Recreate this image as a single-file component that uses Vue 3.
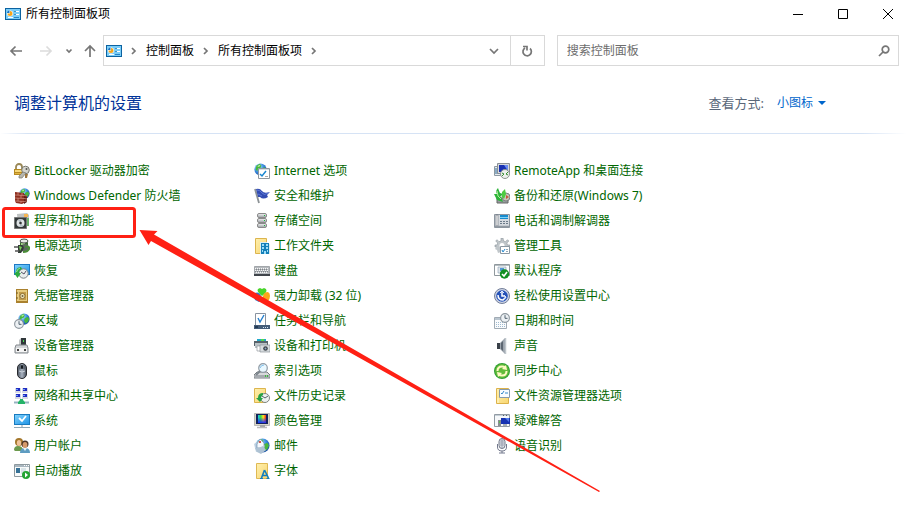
<script setup>
import { ref } from 'vue'

const search = ref('')
const viewMode = ref('small')

const columns = [
  [
    ['bitlocker', 'BitLocker 驱动器加密'],
    ['firewall', 'Windows Defender 防火墙'],
    ['programs', '程序和功能'],
    ['power', '电源选项'],
    ['recovery', '恢复'],
    ['credential', '凭据管理器'],
    ['region', '区域'],
    ['device', '设备管理器'],
    ['mouse', '鼠标'],
    ['network', '网络和共享中心'],
    ['system', '系统'],
    ['users', '用户帐户'],
    ['autoplay', '自动播放'],
  ],
  [
    ['internet', 'Internet 选项'],
    ['flag', '安全和维护'],
    ['storage', '存储空间'],
    ['workfolder', '工作文件夹'],
    ['keyboard', '键盘'],
    ['uninstall', '强力卸载 (32 位)'],
    ['taskbar', '任务栏和导航'],
    ['printer', '设备和打印机'],
    ['indexing', '索引选项'],
    ['history', '文件历史记录'],
    ['color', '颜色管理'],
    ['mail', '邮件'],
    ['fonts', '字体'],
  ],
  [
    ['remote', 'RemoteApp 和桌面连接'],
    ['backup', '备份和还原(Windows 7)'],
    ['phone', '电话和调制解调器'],
    ['tools', '管理工具'],
    ['defaults', '默认程序'],
    ['ease', '轻松使用设置中心'],
    ['datetime', '日期和时间'],
    ['sound', '声音'],
    ['sync', '同步中心'],
    ['explorer', '文件资源管理器选项'],
    ['trouble', '疑难解答'],
    ['speech', '语音识别'],
  ],
]
</script>

<template>
  <div class="window">
    <svg class="sprite" aria-hidden="true">
      <defs>
        <linearGradient id="g-screen" x1="0" y1="0" x2="1" y2="1"><stop offset="0" stop-color="#7fd0fb" /><stop offset="1" stop-color="#2196e8" /></linearGradient>
        <linearGradient id="g-metal" x1="0" y1="0" x2="0" y2="1"><stop offset="0" stop-color="#f4f4f4" /><stop offset="1" stop-color="#9a9fa5" /></linearGradient>
        <linearGradient id="g-folder" x1="0" y1="0" x2="1" y2="1"><stop offset="0" stop-color="#fff0ae" /><stop offset="1" stop-color="#f8d671" /></linearGradient>
        <linearGradient id="g-mouse" x1="0" y1="0" x2="1" y2="0"><stop offset="0" stop-color="#4f5864" /><stop offset="0.5" stop-color="#a8b2c0" /><stop offset="1" stop-color="#444c58" /></linearGradient>
        <linearGradient id="g-rainbow" x1="0" y1="0" x2="1" y2="0"><stop offset="0" stop-color="#18c8e8" /><stop offset="0.35" stop-color="#35db3c" /><stop offset="0.65" stop-color="#ffe326" /><stop offset="1" stop-color="#f02a1c" /></linearGradient>
        <linearGradient id="g-fade" x1="0" y1="0" x2="0" y2="1"><stop offset="0.3" stop-color="#1b2df5" stop-opacity="0" /><stop offset="1" stop-color="#1b2df5" /></linearGradient>
        <radialGradient id="g-globe" cx="0.35" cy="0.3" r="0.8"><stop offset="0" stop-color="#b6e6ff" /><stop offset="0.5" stop-color="#3c8ee0" /><stop offset="1" stop-color="#123f9c" /></radialGradient>

        <symbol id="panel" viewBox="0 0 16 12">
          <path d="M0 0h16v12H0z" fill="#0c62a0" /><path d="M1 1h14v10H1z" fill="#79cdf8" />
          <circle cx="5" cy="5.500" r="3" fill="#fff" /><path d="M5 5.500V3a2.500 2.500 0 1 1-2.500 2.500z" fill="#f4a51c" /><path d="M4.500 5V2.500A2.500 2.500 0 0 0 2 5z" fill="#1b74c4" />
          <path d="M9.500 3.500h1M9.500 6.500h1" stroke="#075996" /><path d="M11 3.500h3M11 6.500h3M3 9.500h5" stroke="#fff" /><path d="M9 9.500h5" stroke="#2584c6" />
        </symbol>
        <symbol id="globe" viewBox="0 0 16 16">
          <circle cx="8" cy="8" r="7.500" fill="url(#g-globe)" /><path d="M3 3.500 7 1l2 2-1 3-3 1-1 3-2-2zM9 7l4-2 2 3-2 4-3 2-2-4z" fill="#48b83c" /><path d="M4 4l3-2 1 1-2 2z" fill="#b9efa0" />
        </symbol>
        <symbol id="clock" viewBox="0 0 16 16">
          <circle cx="8" cy="8" r="7" fill="#edf1f4" stroke="#8d969e" stroke-width="1.800" /><path d="M8 3.500V8.500h4" fill="none" stroke="#50606e" stroke-width="1.600" />
        </symbol>

        <symbol id="bitlocker" viewBox="0 0 16 16">
          <path d="M2 7V4a3 3 0 0 1 6 0v3" fill="none" stroke="#9a8857" stroke-width="1.800" /><path d="M0 6h9v6H0z" fill="#b78a22" /><path d="M1 7h7v2H1z" fill="#f6d779" /><path d="M1 10h7v1H1z" fill="#e2b544" />
          <circle cx="11.500" cy="7" r="3.800" fill="#d5d5ce" stroke="#77776e" /><circle cx="12.500" cy="6" r="1" fill="#55554f" /><path d="m9 9-4 4v2h3l4-5z" fill="#b6b6ad" stroke="#77776e" stroke-width=".7" /><path d="M11 11h3l-1 4h-2z" fill="#9c7840" />
        </symbol>
        <symbol id="firewall" viewBox="0 0 16 16">
          <use href="#globe" x="5" y="0" width="11" height="11" /><path d="M1 4 10 5v10l-2 1-6-1-1-2z" fill="#8d2f21" /><path d="M10 6l3 2v6l-3 2z" fill="#5e1c14" />
          <path d="M1 7l9 .5 3 .5M1 10l9 .5 3 .5M1 13l9 .5 3-.5" stroke="#d59687" stroke-width=".7" fill="none" /><path d="M4 4v3M7 7v3M4 10v3M7 13v2M8 5v2" stroke="#d59687" stroke-width=".7" />
        </symbol>
        <symbol id="programs" viewBox="0 0 16 16">
          <path d="M3 1 13 0l2 2v11H4z" fill="#bfc2c2" /><path d="M10 1h4v3h-4z" fill="#f6b653" /><path d="M13 5h2v8h-2z" fill="#6ab26c" /><path d="M.5 4.500h12v11H.5z" fill="#333839" stroke="#777" /><circle cx="6.500" cy="10" r="4" fill="#dfe3e5" /><path d="M6.500 10 4 7l4-1zM6.500 10l3 3-4 .8z" fill="#b3bec5" /><circle cx="6.500" cy="10" r="1.300" fill="#333" />
        </symbol>
        <symbol id="power" viewBox="0 0 16 16">
          <path d="M6 3h8v8H6z" fill="#376b2c" /><path d="M7 3h4v7H7z" fill="#a8db8f" /><ellipse cx="10" cy="3" rx="4" ry="2" fill="#e5e8e5" stroke="#4c524e" /><circle cx="11" cy="10" r="4" fill="#5d6760" /><path d="M11 9c3-1 5 0 4 2s-3 3-6 3" fill="none" stroke="#4a8d38" stroke-width="2" /><path d="M4 7h4q3 2 1 5l-2 3H4z" fill="#343d38" /><path d="M0 9h4M1 13h4" stroke="#555" stroke-width="1.500" /><path d="m5 8 3 1-2 4z" fill="#7bd25a" />
        </symbol>
        <symbol id="recovery" viewBox="0 0 16 16">
          <path d="M0 1h16v11H0z" fill="#1d79c4" /><path d="M1 2h14v9H1z" fill="url(#g-screen)" /><circle cx="9.500" cy="10.500" r="4.700" fill="#e9eded" stroke="#768083" /><path d="m7 9 3 2 2-3" fill="none" stroke="#556" /><path d="M7 4Q2 4 1.500 10H0l3.500 5L7 10H5q0-3 3-4z" fill="#2dab40" /><path d="M6 5Q3 6 2.500 9" stroke="#a5e29b" fill="none" />
        </symbol>
        <symbol id="credential" viewBox="0 0 16 16">
          <path d="M2 1h12v14H2z" fill="#aa812e" /><path d="M3 2h10v11H3z" fill="#e7cc80" /><path d="M5 4h7v8H5z" fill="#c39c49" /><circle cx="8.500" cy="8" r="2.600" fill="#f2e7bb" stroke="#8e7138" /><circle cx="8.500" cy="8" r="1" fill="#706243" /><path d="M3 4v2M3 9v2" stroke="#725920" />
        </symbol>
        <symbol id="region" viewBox="0 0 16 16"><use href="#globe" x="4" y="0" width="12" height="12" /><use href="#clock" x="0" y="6" width="10" height="10" /></symbol>
        <symbol id="device" viewBox="0 0 16 16">
          <path d="M7 0h5v9H7z" fill="#30373a" /><path d="m5 2 2-2v9H5z" fill="#c1c4c5" /><path d="M9 2h1v2H9z" fill="#49dc53" /><path d="m2 7h11l1 3v5H1v-5z" fill="#d2d5d8" stroke="#858a8f" /><path d="M2 10h11v4H2z" fill="#f5f5f5" /><path d="M3 11h2v2H3zM10 11h2v2h-2z" fill="#444" />
        </symbol>
        <symbol id="mouse" viewBox="0 0 16 16"><rect x="3.500" y=".5" width="9" height="15" rx="4.500" fill="url(#g-mouse)" stroke="#27292d" /><path d="M6 1v5M10 1v5" stroke="#414a55" /><rect x="7" y="2" width="2" height="4" rx="1" fill="#14191e" /><path d="M5 8q3 2 6 0" fill="none" stroke="#c9d0d9" /></symbol>
        <symbol id="network" viewBox="0 0 16 16">
          <path d="M1 0h6v5H1zM8 0h6v5H8zM1 6h6v5H1zM8 6h6v5H8z" fill="#d7dae5" /><path d="M2 0h4v3H2zM9 0h4v3H9zM2 6h4v3H2zM9 6h4v3H9z" fill="#202cc0" /><path d="M2 1h2v1H2zM9 1h2v1H9zM2 7h2v1H2zM9 7h2v1H9z" fill="#6e9cff" /><path d="M6 11h3v1l2 2v2H4v-2l2-2z" fill="#24b368" /><path d="M0 14.500h4M11 14.500h4" stroke="#98b3c1" stroke-width="2" />
        </symbol>
        <symbol id="system" viewBox="0 0 16 16"><path d="M0 1h16v11H0z" fill="#187bc0" /><path d="M1 2h14v9H1z" fill="url(#g-screen)" /><path d="m5 5 3 3 4-5" stroke="#fff" stroke-width="1.800" fill="none" /><path d="M7 12h2v2H7z" fill="#c4cdd4" /><path d="M0 14.500h16" stroke="#8fa8b7" /></symbol>
        <symbol id="users" viewBox="0 0 16 16">
          <circle cx="5" cy="4" r="4" fill="#a4772b" /><ellipse cx="5" cy="5" rx="2.200" ry="3" fill="#f0c39a" /><path d="M0 12q0-4 4-4 5 0 5 5H1z" fill="#6c9a4d" /><circle cx="11" cy="6" r="3.500" fill="#4c3527" /><ellipse cx="11" cy="7" rx="2.400" ry="3" fill="#d69a6b" /><path d="M6 15q0-5 5-5t5 5z" fill="#5e9cc1" /><path d="m9 10 2 3 2-3z" fill="#e9f3f6" />
        </symbol>
        <symbol id="autoplay" viewBox="0 0 16 16"><path d="M.5 1.500h15v12H.5z" fill="#f8fafa" stroke="#8e999e" /><path d="M1 2h14v2H1z" fill="#a9b6bf" /><path d="M10 2h1v1h-1zM12 2h1v1h-1zM14 2h1v1h-1z" fill="#fff" /><path d="M2 5h4v5H2z" fill="#367196" /><path d="M7 5h5v6H7z" fill="#d9e4e8" /><circle cx="12" cy="12" r="4" fill="#23a432" /><path d="m11 9.500 3 2.500-3 2.500z" fill="#fff" /></symbol>

        <symbol id="internet" viewBox="0 0 16 16"><use href="#globe" width="13" height="13" /><path d="M4.500 5.500h11v10h-11z" fill="#fff" stroke="#8f979e" /><path d="M5 6h10v1H5z" fill="#d6dde2" /><path d="m6 11 2 2 4-5" stroke="#1886d0" stroke-width="1.500" fill="none" /><path d="M11 13.500h3" stroke="#aaa" /></symbol>
        <symbol id="flag" viewBox="0 0 16 16"><path d="m1 1 4 14" stroke="#8c9295" stroke-width="1.800" /><path d="M2 1q4-1 6 2t8 1l-3 3 1 2q-5 3-8 0H4z" fill="#334cb2" /><path d="m3 2q3 0 5 3t6 0M4 6l4 2" fill="none" stroke="#6784dd" stroke-width=".8" /></symbol>
        <symbol id="storage" viewBox="0 0 16 16"><g fill="url(#g-metal)" stroke="#8a8a8a"><rect x="3.500" y=".5" width="9" height="4" rx="1.500" /><rect x="3.500" y="5.500" width="9" height="4" rx="1.500" /><rect x="3.500" y="10.500" width="9" height="4" rx="1.500" /></g><path d="M10 2h1v1h-1zM10 7h1v1h-1zM10 12h1v1h-1z" fill="#19bf38" /></symbol>
        <symbol id="workfolder" viewBox="0 0 16 16"><path d="M1.500.5h11v15h-11z" fill="url(#g-folder)" stroke="#dcb54e" /><path d="M6 4h7v2h3v10H6z" fill="#d9edf2" /><path d="M7 5h8v11H7z" fill="#137fb8" /><path d="M8 6h2v2H8zM12 6h2v2h-2zM8 9h2v2H8zM12 9h2v2h-2zM8 12h1v2H8zM13 12h1v2h-1zM10 13h2v3h-2z" fill="#9cdcf8" /></symbol>
        <symbol id="keyboard" viewBox="0 0 16 16"><path d="M.5 3.500h15v9H.5z" fill="#b5b9bd" stroke="#a2a6aa" /><path d="M0 11h16v2H0z" fill="#40454b" /><path d="M1 5.500h14M1 7.500h14M2 9.500h12" stroke="#f7f7f7" stroke-dasharray="1 1" /><path d="M2 6.500h12M1 8.500h14" stroke="#80858a" stroke-dasharray="1 1" /></symbol>
        <symbol id="uninstall" viewBox="0 0 16 16"><path d="M8 8Q2 3 4 1l2-1 2 1 2-1 2 1q2 3-4 7z" fill="#48d52b" /><path d="M9 8q1-4 5-4 2 1 2 4t-2 5l-4 1q-2-2-1-6z" fill="#fba51b" /><path d="M7 8Q5 3 1 5q-2 3 0 7l4 2q3-2 2-6z" fill="#2878d4" /></symbol>
        <symbol id="taskbar" viewBox="0 0 16 16"><path d="M1.500.5h10v12h-10z" fill="#fff" stroke="#8993a0" /><path d="m4 5 2 4 4-7" stroke="#247fce" stroke-width="1.400" fill="none" /><path d="M0 12h16v4H0z" fill="#445c78" /><path d="M1 13h3v2H1z" fill="#233a55" /><path d="M9 14.500h6" stroke="#d2e5f6" stroke-dasharray="1 1" /></symbol>
        <symbol id="printer" viewBox="0 0 16 16"><path d="M3 1h9v4H3z" fill="#21a9ca" /><path d="M7 1h3v3H7z" fill="#56d84c" /><path d="M0 3h14v5H0z" fill="#58636b" /><path d="M1 5h12v5H1z" fill="#bac2c6" /><path d="M3 8h4v5H3z" fill="#fff" stroke="#838b90" stroke-width=".6" /><path d="M6 7h10v7H6z" fill="#d8dde0" stroke="#8c9499" stroke-width=".7" /><circle cx="11.500" cy="10.500" r="2.300" fill="#3d4146" /><circle cx="11.500" cy="10.500" r="1" fill="#8fa9c4" /></symbol>
        <symbol id="indexing" viewBox="0 0 16 16"><path d="m3 9 10 0 3 3v3H0v-3z" fill="#d7d9db" stroke="#777d81" /><path d="M1 12h14v3H1z" fill="#a6abb0" /><path d="M11 12h1v2h-1zM13 12h1v2h-1z" fill="#3cba3d" /><circle cx="9" cy="5" r="4.300" fill="#e9f8ff" stroke="#929da7" stroke-width="1.200" /><path d="M6 5q1-3 4-3" stroke="#80bfeb" fill="none" /><path d="m6 8-4 4" stroke="#7c858c" stroke-width="2" /></symbol>
        <symbol id="history" viewBox="0 0 16 16"><path d="M.5.5h11v14H.5z" fill="url(#g-folder)" stroke="#dcb54e" /><circle cx="11" cy="10" r="4.500" fill="#edf1ef" stroke="#7f8682" /><path d="m8 8 3 2 3-2" fill="none" stroke="#526069" /><path d="M9 5Q4 5 4 10H2l4 4 3-4H7q0-2 2-3z" fill="#28a245" /></symbol>
        <symbol id="color" viewBox="0 0 16 16"><path d="M.5.5h15v12H.5z" fill="#d8d6c8" stroke="#999" stroke-width=".6" /><path d="M2 1h12v10H2z" fill="#14235d" /><path d="M4 2h8v8H4z" fill="url(#g-rainbow)" /><path d="M4 2h8v8H4z" fill="url(#g-fade)" /><path d="M6 12h5v2H6z" fill="#a1a5a4" /><path d="M3 14.500h10" stroke="#bbb" stroke-width="1.500" /></symbol>
        <symbol id="mail" viewBox="0 0 16 16"><use href="#globe" x="1" width="15" height="15" /><path d="m0 6 7-5 4 7-2 6H2z" fill="#bdcfe0" opacity=".9" /><path d="M3 6 6 1l4 4v5H3z" fill="#f5f9fd" stroke="#6685a3" stroke-width=".6" /><path d="M5 3h2v2H5z" fill="#d55b51" /><path d="M1 10q5 0 8-2l3 4-5 4-4-2z" fill="#aec2d3" /></symbol>
        <symbol id="fonts" viewBox="0 0 16 16"><path d="M2.500.5h11v15h-11z" fill="url(#g-folder)" stroke="#dfb953" /><path d="M10.500 7 7.500 15M10.500 7l4 8M9 12.500h4" fill="none" stroke="#127ebe" stroke-width="1.600" /><path d="M6 15.500h3M12.500 15.500h3" stroke="#127ebe" /></symbol>

        <symbol id="remote" viewBox="0 0 16 16"><path d="M.5 3.500h6v9h-6z" fill="#e6ebef" stroke="#8d99a2" /><path d="M1 5h4v6H1z" fill="#8aabc3" /><path d="M3.500.5h12v10h-12z" fill="#d5d9dc" stroke="#898f96" /><path d="M5 2h9v7H5z" fill="#1830b1" /><path d="M10 2h4v6z" fill="#698cf2" /><circle cx="11" cy="11" r="4.500" fill="#edf0ed" stroke="#8d9690" /><path d="m8 10 2 1-2 2M14 9l-2 2 2 1" stroke="#368e32" fill="none" /></symbol>
        <symbol id="backup" viewBox="0 0 16 16"><path d="M3 10h11v5H3z" fill="#979da0" stroke="#666" /><circle cx="12" cy="9" r="4" fill="#c8c5b9" stroke="#7d8181" /><path d="m12 7 3 2-3 2z" fill="#c4573e" /><path d="M4 0q-3 3-1 6H0l3 6 6 2-2-5H6l3-3-3-1Q5 3 4 0z" fill="#2cb439" /><path d="m8 4 3-3 1 5-2 5-2-2z" fill="#4ecb41" /><path d="m3 3 1 5 3 3" stroke="#b2ef9b" fill="none" /></symbol>
        <symbol id="phone" viewBox="0 0 16 16"><path d="M.5 1.500h15v13H.5z" fill="#d6dadf" stroke="#8c959f" /><path d="M2 2h2v11H2z" fill="#f8f8f8" stroke="#666d75" stroke-width=".6" /><path d="M6 2h8v4H6z" fill="#178bce" /><path d="M6 4.500h8" stroke="#81d3f7" /><path d="M6 8.500h8M6 10.500h8" stroke="#6b7a89" stroke-dasharray="2 1" /><path d="M1 13.500h14" stroke="#9199a2" stroke-width="1.500" /></symbol>
        <symbol id="tools" viewBox="0 0 16 16"><path d="m7 0h2l.5 3 2 .7 2-2 1.300 1.300-2 2 .7 2H16v2H1V7h2l.7-2-2-2L3 1.700l2 2L7 3z" fill="#c0c6ca" stroke="#8c959b" stroke-width=".6" /><path d="m3 8-2 3 2 1 1 3 3-1V8z" fill="#c0c6ca" /><circle cx="8" cy="7.500" r="2.500" fill="#fff" /><path d="M6.500 8.500h9v7h-9z" fill="#fff" stroke="#8b98a2" /><path d="m8 12 1 2 2-3" fill="none" stroke="#2188d0" /><path d="M12 11.500h2M12 13.500h2" stroke="#95a9b7" /></symbol>
        <symbol id="defaults" viewBox="0 0 16 16"><path d="M.5 1.500h15v11H.5z" fill="#fff" stroke="#8f989d" /><path d="M1 2h14v1H1z" fill="#b5bdc2" /><path d="M4 4h8v6H4z" fill="#e0e7ec" stroke="#89a0b3" stroke-width=".6" /><path d="M6 5h4v3H6z" fill="#5298d4" /><circle cx="10.500" cy="11" r="4.700" fill="#108f22" /><path d="m8 11 2 2 3-4" stroke="#fff" stroke-width="1.600" fill="none" /></symbol>
        <symbol id="ease" viewBox="0 0 16 16"><circle cx="8" cy="8" r="7.500" fill="#cfd6e6" stroke="#737e99" /><circle cx="8" cy="8" r="5.800" fill="#2552b8" /><path d="M4 7q0 5 5 5l3-3M8 4v4h3" fill="none" stroke="#fff" stroke-width="1.500" /><path d="m6 5 2-2 2 2M10 7l2 2-2 2" fill="none" stroke="#dbe9ff" /></symbol>
        <symbol id="datetime" viewBox="0 0 16 16"><path d="M.5 4.500h12v11H.5z" fill="#fafbfc" stroke="#a1abb4" /><path d="M1 5h11v2H1z" fill="#bac6d0" /><path d="M2 9.500h9M2 11.500h9M2 13.500h9" stroke="#a0bbd0" stroke-dasharray="1 1" /><use href="#clock" x="6" y="0" width="10" height="10" /></symbol>
        <symbol id="sound" viewBox="0 0 16 16"><path d="M3 5h3v6H3z" fill="#394149" /><path d="m6 5 5-5v16l-5-5z" fill="#9ca4ad" /><path d="m7 5 2-2v10l-2-2z" fill="#5c6671" /><path d="M11.500 0v16" stroke="#bec5cb" stroke-width="1.500" /></symbol>
        <symbol id="sync" viewBox="0 0 16 16"><circle cx="8" cy="8" r="8" fill="#2f9f31" /><circle cx="8" cy="8" r="6.900" fill="#62bc3b" /><path d="M3.500 8q0-4.500 4.500-4.500 2 0 3 1" fill="none" stroke="#fff9c5" stroke-width="2" /><path d="m12 2 1 5-5-1z" fill="#fff9c5" /><path d="M12.500 8q0 4.500-4.500 4.500-2 0-3-1" fill="none" stroke="#fff9c5" stroke-width="2" /><path d="m4 14-1-5 5 1z" fill="#fff9c5" /></symbol>
        <symbol id="explorer" viewBox="0 0 16 16"><path d="M2.500.5h12v15h-12z" fill="url(#g-folder)" stroke="#dcb24b" /><path d="M5.500 1.500h10v8h-10z" fill="#f9fcff" stroke="#869aab" /><path d="m7 5 1 1 2-3M11 5h3" stroke="#3689c9" fill="none" /><path d="M4 10v5" stroke="#ffefad" stroke-width="2" /></symbol>
        <symbol id="trouble" viewBox="0 0 16 16"><path d="M.5 1.500h15v12H.5z" fill="#f6f8fa" stroke="#929ba4" /><path d="M1 2h14v1H1z" fill="#c6d0d8" /><path d="M9 2h1v1H9zM12 2h1v1h-1z" fill="#55616b" /><path d="M7 5h9v6H7z" fill="#1732b2" /><path d="m11 5h4v4z" fill="#537fed" /><path d="M4 7h3v6H4z" fill="#888d91" /><path d="M5 8h1v2H5z" fill="#5dba54" /><path d="M9 11h4v2H9z" fill="#aab0b6" /></symbol>
        <symbol id="speech" viewBox="0 0 16 16"><rect x="5" y=".5" width="6" height="10" rx="3" fill="#dce0e7" stroke="#737989" /><path d="M8 1v9M6 3h4M6 5h4M6 7h4" stroke="#8b91a0" stroke-width=".7" /><path d="M3.500 6v3q0 4 4.500 4t4.500-4V6M8 13v2M5 15h6" fill="none" stroke="#73798d" /></symbol>
      </defs>
    </svg>

    <header class="titlebar">
      <svg class="panel-icon" aria-hidden="true"><use href="#panel" /></svg>
      <span class="title">所有控制面板项</span>
      <div class="controls">
        <button type="button" aria-label="最小化"><svg viewBox="0 0 12 12"><path d="M1 6.500h10" /></svg></button>
        <button type="button" aria-label="最大化"><svg viewBox="0 0 12 12"><path d="M1.500 1.500h9v9h-9z" /></svg></button>
        <button type="button" aria-label="关闭"><svg viewBox="0 0 12 12"><path d="m1 1 10 10M11 1 1 11" /></svg></button>
      </div>
    </header>

    <div class="navbar">
      <div class="history">
        <button type="button" class="step" aria-label="后退"><svg viewBox="0 0 16 16"><path d="M14 8H3M7.500 3.500 3 8l4.500 4.500" /></svg></button>
        <button type="button" class="step forward" aria-label="前进" disabled><svg viewBox="0 0 16 16"><path d="M2 8h11M8.500 3.500 13 8l-4.500 4.500" /></svg></button>
        <button type="button" class="recent" aria-label="最近浏览的位置"><svg viewBox="0 0 10 10"><path d="m2.500 3.500 2.500 2.500 2.500-2.500" /></svg></button>
        <button type="button" class="step" aria-label="上移"><svg viewBox="0 0 16 16"><path d="M8 14V3M3 8l5-5 5 5" /></svg></button>
      </div>
      <div class="address">
        <svg class="panel-icon" aria-hidden="true"><use href="#panel" /></svg>
        <nav class="crumbs" aria-label="路径">
          <svg class="chevron" viewBox="0 0 8 8"><path d="m2 1 3 3-3 3" /></svg>
          <a href="#">控制面板</a>
          <svg class="chevron" viewBox="0 0 8 8"><path d="m2 1 3 3-3 3" /></svg>
          <a href="#">所有控制面板项</a>
          <svg class="chevron" viewBox="0 0 8 8"><path d="m2 1 3 3-3 3" /></svg>
        </nav>
        <button type="button" class="expand" aria-label="以前的位置"><svg viewBox="0 0 10 10"><path d="m1 3 4 4 4-4" /></svg></button>
        <button type="button" class="refresh" aria-label="刷新"><svg viewBox="0 0 12 12"><path d="M9 3.500a4.200 4.200 0 1 1-5-.5M2 1.500h4v4" /></svg></button>
      </div>
      <form class="search" role="search" @submit.prevent>
        <input v-model="search" type="text" placeholder="搜索控制面板" aria-label="搜索控制面板" />
        <button type="submit" aria-label="搜索"><svg viewBox="0 0 12 12"><circle cx="7.500" cy="4.500" r="3.300" /><path d="m5 7-4 4" /></svg></button>
      </form>
    </div>

    <main>
      <div class="heading">
        <h1>调整计算机的设置</h1>
        <div class="view">
          <label for="view-mode">查看方式:</label>
          <span class="picker">
            <select id="view-mode" v-model="viewMode">
              <option value="category">类别</option>
              <option value="large">大图标</option>
              <option value="small">小图标</option>
            </select>
            <svg viewBox="0 0 8 4" aria-hidden="true"><path d="M0 0h8L4 4z" /></svg>
          </span>
        </div>
      </div>

      <div class="columns">
        <ul v-for="(items, index) in columns" :key="index">
          <li v-for="[icon, name] in items" :key="icon">
            <a href="#" class="item"><svg aria-hidden="true"><use :href="'#' + icon" /></svg>{{ name }}</a>
          </li>
        </ul>
      </div>
    </main>

    <svg class="annotation" width="602" height="494" viewBox="0 0 602 494" aria-hidden="true">
      <rect x="3.500" y="208.500" width="131" height="28" rx="2" />
      <path d="M139.500 230 157.500 231 154 234.500 600 491 599 492 151 241 148.500 245z" />
    </svg>
  </div>
</template>

<style>
body {
  background: #fff;
}
</style>

<style scoped>
.window {
  position: relative;
  color: #000;
  font: 12px/16px "Noto Sans", "Noto Sans CJK SC", sans-serif;
}
.sprite {
  position: absolute;
  width: 0;
  height: 0;
}
button {
  display: flex;
  align-items: center;
  justify-content: center;
  padding: 0;
  border: 0;
  background: none;
}
button svg,
.chevron {
  fill: none;
  stroke: #767676;
  stroke-width: 1.7;
}
a {
  color: inherit;
  text-decoration: none;
}
.panel-icon {
  flex: none;
  width: 16px;
  height: 12px;
}
.titlebar {
  display: flex;
  align-items: center;
  gap: 5px;
  height: 28px;
  padding-left: 5px;
}
.title {
  line-height: 18px;
}
.controls {
  display: flex;
  gap: 7px;
  margin-left: auto;
}
.controls button {
  width: 38px;
  height: 28px;
}
.controls svg {
  width: 12px;
  height: 12px;
  stroke: #000;
  stroke-width: 1;
}
.navbar {
  display: flex;
  height: 31px;
  padding: 7px 8px 0;
}
.history {
  display: flex;
  align-items: center;
  width: 95px;
}
.step svg {
  width: 16px;
  height: 16px;
}
.forward {
  margin-left: 14px;
}
.forward svg {
  stroke: #dcdcdc;
}
.recent {
  margin: 0 8px 0 10px;
}
.recent svg,
.expand svg {
  width: 10px;
  height: 10px;
}
.address,
.search {
  display: flex;
  align-items: center;
  box-sizing: border-box;
  min-width: 0;
  border: 1px solid #d9d9d9;
}
.address {
  flex: 9 1 0;
  padding-left: 2px;
}
.crumbs {
  display: flex;
  flex: 1;
  align-items: center;
}
.chevron {
  width: 8px;
  height: 8px;
  margin: 0 8px;
}
.expand {
  align-self: stretch;
  width: 32px;
}
.refresh {
  align-self: stretch;
  width: 34px;
  border-left: 1px solid #d9d9d9;
}
.refresh svg,
.search svg {
  width: 12px;
  height: 12px;
}
.search {
  flex: 7 1 0;
  margin-left: 12px;
}
.search input {
  flex: 1;
  min-width: 0;
  padding: 0 0 0 9px;
  border: 0;
  outline: 0;
  background: none;
  font: inherit;
}
.search input::placeholder {
  color: #6d6d6d;
}
.search button {
  width: 28px;
  height: 28px;
}
.heading {
  display: flex;
  align-items: center;
  justify-content: space-between;
  height: 60px;
  padding: 7px 81px 0 14px;
}
h1 {
  margin: 0;
  color: #003399;
  font-size: 16px;
  font-weight: 400;
  line-height: 24px;
}
.view {
  display: flex;
  gap: 13px;
  align-items: center;
}
.view label {
  color: #5a6779;
  font-size: 13px;
}
.picker {
  display: flex;
  align-items: center;
  gap: 4px;
}
.picker select {
  appearance: none;
  padding: 0;
  border: 0;
  background: none;
  color: #0066cc;
  font: inherit;
}
.picker svg {
  width: 8px;
  height: 4px;
  fill: #0066cc;
}
.columns {
  display: grid;
  grid-template-columns: repeat(3, 240px);
  padding: 25px 14px;
  background: linear-gradient(90deg, transparent, #d6e3f5 3%, #d6e3f5 95%, transparent) top / 100% 1px no-repeat;
}
ul {
  margin: 0;
  padding: 0;
  list-style: none;
}
.item {
  display: flex;
  align-items: center;
  gap: 4px;
  height: 25px;
  color: #006600;
  white-space: nowrap;
}
.item svg {
  flex: none;
  width: 16px;
  height: 16px;
}
.annotation {
  position: absolute;
  top: 0;
  left: 0;
  pointer-events: none;
}
.annotation rect {
  fill: none;
  stroke: #ff2014;
  stroke-width: 3;
}
.annotation path {
  fill: #ff2014;
}
</style>
